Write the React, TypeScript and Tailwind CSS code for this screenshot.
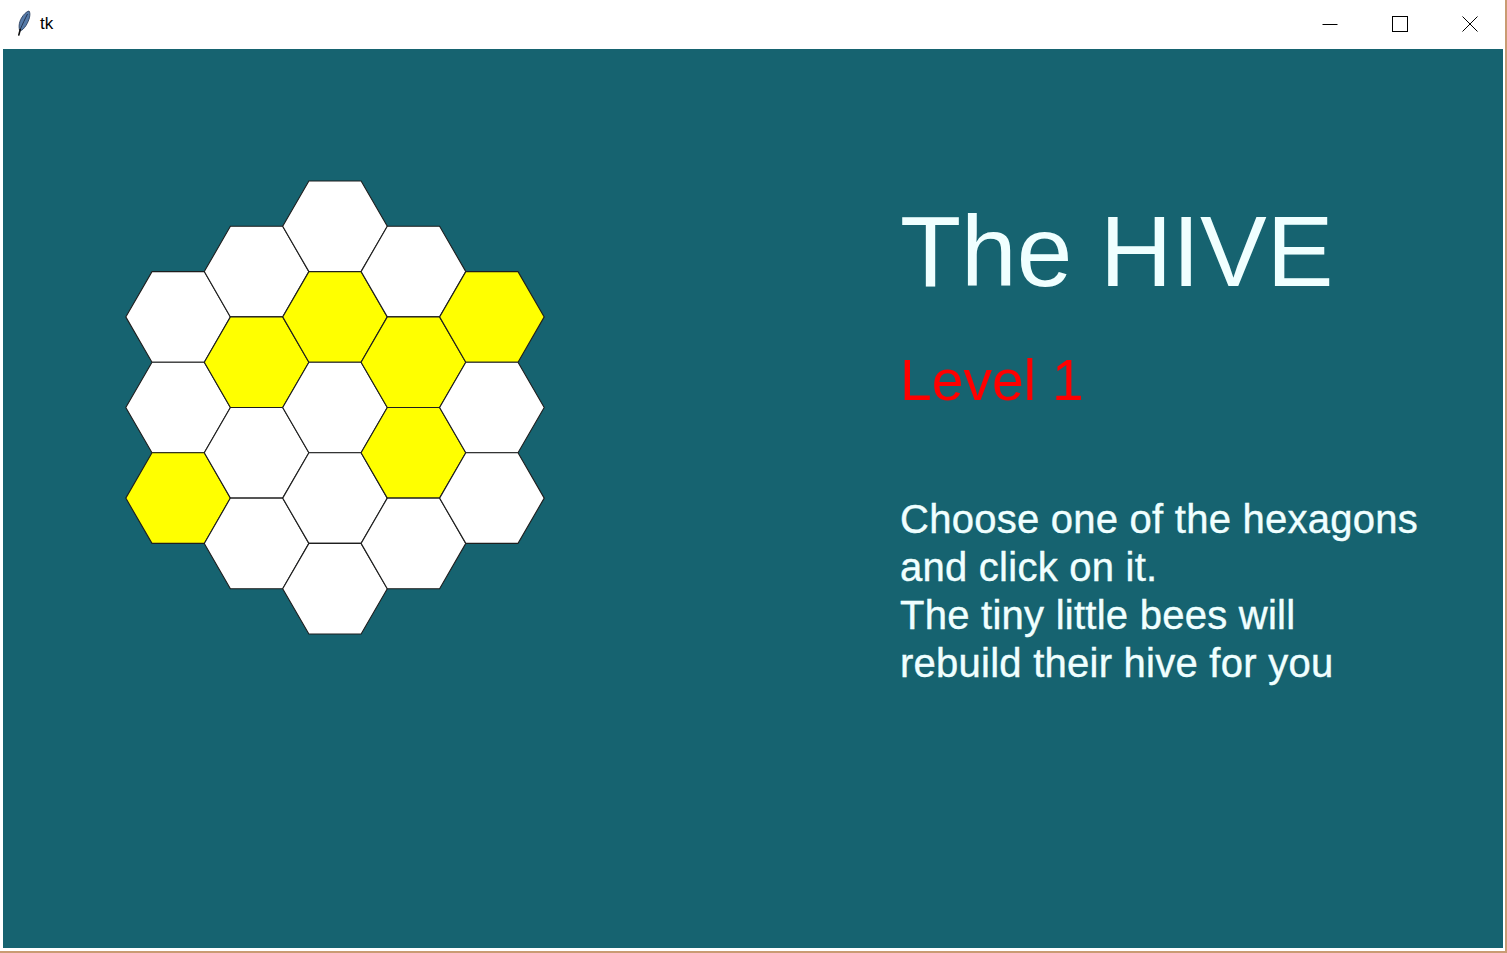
import React from "react";

const S = 52.3;
const H = S * Math.sqrt(3);
const CX = 335;
const CY = 407.5;

// columns of the hive, left to right; true = yellow cell
const columns: boolean[][] = [
  [false, false, true],
  [false, true, false, false],
  [false, true, false, false, false],
  [false, true, true, false],
  [true, false, false],
];

const hexPoints = (cx: number, cy: number) =>
  [
    [cx + S, cy],
    [cx + S / 2, cy + H / 2],
    [cx - S / 2, cy + H / 2],
    [cx - S, cy],
    [cx - S / 2, cy - H / 2],
    [cx + S / 2, cy - H / 2],
  ]
    .map((p) => p.map((n) => n.toFixed(1)).join(","))
    .join(" ");

const Hive = () => {
  const cells: { x: number; y: number; yellow: boolean }[] = [];
  columns.forEach((col, i) => {
    const q = i - 2;
    const x = CX + q * 1.5 * S;
    const first = CY - ((col.length - 1) / 2) * H;
    col.forEach((yellow, r) => cells.push({ x, y: first + r * H, yellow }));
  });

  return (
    <svg
      width={430}
      height={465}
      viewBox="120 175 430 465"
      className="shrink-0 mt-[126px] ml-[117px]"
    >
      {cells.map((c, i) => (
        <polygon
          key={i}
          points={hexPoints(c.x, c.y)}
          fill={c.yellow ? "#ffff00" : "#ffffff"}
          stroke="#1e1e1e"
          strokeWidth={1.1}
        />
      ))}
    </svg>
  );
};

const Feather = () => (
  <svg width="16" height="26" viewBox="0 0 16 26" className="shrink-0">
    <path
      d="M14 1 C16 3.5 14.5 10 11 15.5 C9 18.5 7 20.5 5 21 C3.5 18 3.8 12.5 6.5 8 C8.5 4.5 11.5 1.5 14 1 Z"
      fill="#557aa8"
      stroke="#2c3f5e"
      strokeWidth="0.9"
    />
    <path d="M12.5 4 C10 9 7.5 14 5 20" stroke="#1d2b44" strokeWidth="0.9" fill="none" />
    <path d="M5.3 19.5 L3.8 25" stroke="#111111" strokeWidth="1.6" strokeLinecap="round" />
  </svg>
);

const App = () => {
  return (
    <div className="w-[1507px] h-[953px] bg-white flex flex-col border-r-2 border-b-2 border-[#c99b73] overflow-hidden font-['Liberation_Sans',Arial,sans-serif]">
      {/* title bar */}
      <div className="h-[47px] flex items-center shrink-0">
        <div className="ml-[15px] mt-[-2px]">
          <Feather />
        </div>
        <span className="ml-[9px] text-[17px] text-black">tk</span>
        <div className="ml-auto flex h-full">
          <div className="w-[70px] flex items-center justify-center">
            <svg width="16" height="16" viewBox="0 0 16 16">
              <line x1="0.5" y1="8.5" x2="15.5" y2="8.5" stroke="#000" strokeWidth="1" />
            </svg>
          </div>
          <div className="w-[70px] flex items-center justify-center">
            <svg width="16" height="16" viewBox="0 0 16 16">
              <rect x="0.5" y="0.5" width="15" height="15" fill="none" stroke="#000" strokeWidth="1" />
            </svg>
          </div>
          <div className="w-[70px] flex items-center justify-center">
            <svg width="16" height="16" viewBox="0 0 16 16">
              <path d="M0.5 0.5 L15.5 15.5 M15.5 0.5 L0.5 15.5" stroke="#000" strokeWidth="1" />
            </svg>
          </div>
        </div>
      </div>

      {/* canvas */}
      <div className="ml-[3px] mr-[2px] mt-[2px] h-[899px] bg-[#166370] flex shrink-0">
        <Hive />
        <div className="ml-[350px] flex flex-col">
          <div className="mt-[152px] text-[100px] leading-[100px] text-[#f0ffff] whitespace-nowrap">
            The HIVE
          </div>
          <div className="mt-[50px] text-[57px] leading-[58px] text-[#ff0000] whitespace-nowrap">
            Level 1
          </div>
          <div className="mt-[86px] text-[40px] leading-[48px] tracking-[0.25px] text-[#f0ffff] whitespace-nowrap [-webkit-text-stroke:0.4px_#f0ffff]">
            <div>Choose one of the hexagons</div>
            <div>and click on it.</div>
            <div>The tiny little bees will</div>
            <div>rebuild their hive for you</div>
          </div>
        </div>
      </div>
    </div>
  );
};

export default App;
